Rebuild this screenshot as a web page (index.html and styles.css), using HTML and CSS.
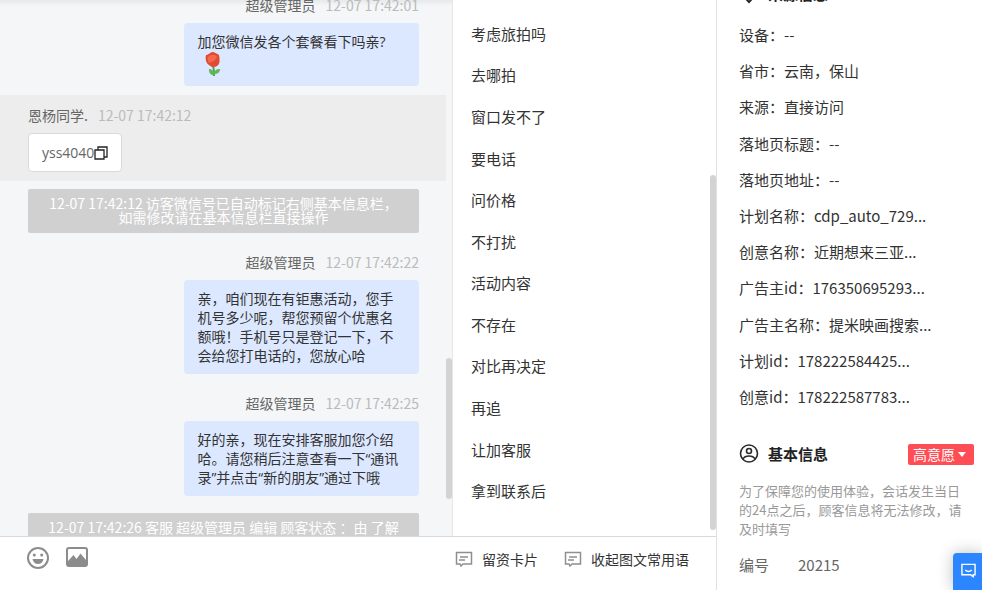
FILE: index.html
```html
<!DOCTYPE html>
<html lang="zh-CN">
<head>
    <meta charset="UTF-8">
    <meta name="viewport" content="width=device-width, initial-scale=1.0">
    <title>在线客服</title>
    <link rel="stylesheet" href="styles.css">
</head>
<body>
    <div class="app">
        <main class="workspace">
            <section class="chat">
                <div class="messages">
                    <div class="message mine">
                        <div class="meta"><span class="name">超级管理员</span><time>12-07 17:42:01</time></div>
                        <div class="bubble">加您微信发各个套餐看下吗亲?
                            <svg class="rose" viewBox="0 0 26 26" role="img" aria-label="玫瑰">
                                <path d="M14 14c1 4 1 7 1 11" stroke="#4fa64a" stroke-width="2" fill="none"/>
                                <path d="M15 24c-4 0-5-2-5-6 3 0 5 2 5 6zM15 23c0-3 2-5 6-5 0 3-2 5-6 5z" fill="#62b75a"/>
                                <path d="M7 4c2 0 3-2 6-3 3 0 5 2 7 3 1 5 1 9-2 11-3 2-6 1-8-1-3-2-4-6-3-10z" fill="#e34a34"/>
                                <path d="M9 6c3-3 7-3 9 0-1 3-4 5-8 6-1-2-2-4-1-6z" fill="#f36a4c"/>
                            </svg>
                        </div>
                    </div>

                    <div class="message visitor">
                        <div class="meta"><span class="name">恩杨同学.</span><time>12-07 17:42:12</time></div>
                        <div class="bubble">yss4040<button class="copy" type="button" aria-label="复制"><svg viewBox="0 0 14 14" fill="none" stroke="#222" stroke-width="1.3"><path d="M1 4h9v9H1z"/><path d="M4 4V1h9v10h-3"/></svg></button></div>
                    </div>

                    <p class="notice">12-07 17:42:12 访客微信号已自动标记右侧基本信息栏，如需修改请在基本信息栏直接操作</p>

                    <div class="message mine">
                        <div class="meta"><span class="name">超级管理员</span><time>12-07 17:42:22</time></div>
                        <div class="bubble">亲，咱们现在有钜惠活动，您手机号多少呢，帮您预留个优惠名额哦！手机号只是登记一下，不会给您打电话的，您放心哈</div>
                    </div>

                    <div class="message mine">
                        <div class="meta"><span class="name">超级管理员</span><time>12-07 17:42:25</time></div>
                        <div class="bubble">好的亲，现在安排客服加您介绍哈。请您稍后注意查看一下“通讯录”并点击“新的朋友”通过下哦</div>
                    </div>

                    <p class="notice">12-07 17:42:26 客服 超级管理员 编辑 顾客状态 ：由 了解</p>
                </div>
                <div class="scroll chat-scroll"></div>
            </section>

            <section class="phrases">
                <ul>
                    <li>考虑旅拍吗</li>
                    <li>去哪拍</li>
                    <li>窗口发不了</li>
                    <li>要电话</li>
                    <li>问价格</li>
                    <li>不打扰</li>
                    <li>活动内容</li>
                    <li>不存在</li>
                    <li>对比再决定</li>
                    <li>再追</li>
                    <li>让加客服</li>
                    <li>拿到联系后</li>
                </ul>
                <div class="scroll phrases-scroll"></div>
            </section>

            <footer class="toolbar">
                <div class="tools">
                    <button type="button" aria-label="表情">
                        <svg viewBox="0 0 22 22" fill="none">
                            <circle cx="11" cy="11" r="10" stroke="#8c8c8c" stroke-width="2"/>
                            <circle cx="7.3" cy="8" r="1.5" fill="#8c8c8c"/>
                            <circle cx="14.7" cy="8" r="1.5" fill="#8c8c8c"/>
                            <path d="M5.5 12h11c-.5 3-2.7 5-5.5 5s-5-2-5.5-5z" fill="#8c8c8c"/>
                        </svg>
                    </button>
                    <button type="button" aria-label="图片">
                        <svg viewBox="0 0 22 22" fill="none">
                            <rect x="1" y="1" width="20" height="18" rx="2" stroke="#8c8c8c" stroke-width="2"/>
                            <path d="M2 14l5.5-6 3 4 4-5.5L20 13v6H2z" fill="#8c8c8c"/>
                        </svg>
                    </button>
                </div>
                <div class="actions">
                    <button type="button">
                        <svg viewBox="0 0 18 16" fill="none" stroke="#8f8f8f" stroke-width="1.5"><path d="M1.5 1.500h15v11.500H8L6 15l-1-2H1.500z"/><path d="M5 6h8M4 9h6"/></svg>
                        留资卡片
                    </button>
                    <button type="button">
                        <svg viewBox="0 0 18 16" fill="none" stroke="#8f8f8f" stroke-width="1.5"><path d="M1.5 1.500h15v11.500H8L6 15l-1-2H1.500z"/><path d="M5 6h8M4 9h6"/></svg>
                        收起图文常用语
                    </button>
                </div>
            </footer>
        </main>

        <aside class="profile">
            <h2>
                <svg viewBox="0 0 20 20" fill="none" stroke="#222" stroke-width="2"><path d="M10 18c-4-4-6-6-6-9a6 6 0 0 1 12 0c0 3-2 5-6 9z"/><circle cx="10" cy="8" r="2"/></svg>
                来源信息
            </h2>
            <ul class="source">
                <li>设备：--</li>
                <li>省市：云南，保山</li>
                <li>来源：直接访问</li>
                <li>落地页标题：--</li>
                <li>落地页地址：--</li>
                <li>计划名称：cdp_auto_729...</li>
                <li>创意名称：近期想来三亚...</li>
                <li>广告主id：176350695293...</li>
                <li>广告主名称：提米映画搜索...</li>
                <li>计划id：178222584425...</li>
                <li>创意id：178222587783...</li>
            </ul>
            <h2>
                <svg viewBox="0 0 20 20" fill="none" stroke="#2b2b2b" stroke-width="1.6"><circle cx="10" cy="9.500" r="8.500"/><circle cx="10" cy="7" r="2.500"/><path d="M4 15c1-2 3-3 6-3s5 1 6 3"/></svg>
                基本信息
                <button class="tag" type="button">高意愿</button>
            </h2>
            <p class="tip">为了保障您的使用体验，会话发生当日的24点之后，顾客信息将无法修改，请及时填写</p>
            <dl class="basic">
                <dt>编号</dt>
                <dd>20215</dd>
            </dl>
        </aside>
    </div>

    <button class="float-chat" type="button" aria-label="在线咨询">
        <svg viewBox="0 0 16 15" fill="none" stroke="#fff" stroke-width="1.5"><path d="M1 1h14v11h-2v2l-3-2H1z"/><path d="M4.5 7c2 1.800 5 1.800 7 0"/></svg>
    </button>
</body>
</html>
```
FILE: styles.css
```css
* {
    box-sizing: border-box;
}
body {
    margin: 0;
    font-family: "Noto Sans CJK SC", sans-serif;
    font-size: 15px;
    line-height: 20px;
    color: #333;
    background: #fff;
}
ul, dl, dd, p, h2 {
    margin: 0;
    padding: 0;
    list-style: none;
}
button {
    padding: 0;
    border: 0;
    background: none;
    font: inherit;
    color: inherit;
    cursor: pointer;
}
svg {
    display: block;
    flex: none;
}
.app {
    display: grid;
    grid-template-columns: 1fr 266px;
    height: 100vh;
    overflow: hidden;
}
.workspace {
    display: grid;
    grid-template-columns: 1fr 264px;
    grid-template-rows: minmax(0, 1fr) 54px;
    min-height: 0;
}

/* chat */
.chat {
    position: relative;
    overflow: hidden;
    padding-right: 6px;
    background: linear-gradient(#e6e8ea, #f4f6f8 6px);
    font-size: 14px;
}
.messages {
    margin-top: -15px;
}
.message {
    display: flex;
    flex-direction: column;
    align-items: flex-start;
    gap: 8px;
    padding: 10px 27px 9px 28px;
}
.mine {
    align-items: flex-end;
}
.visitor {
    background: #ededed;
}
.meta {
    display: flex;
    gap: 10px;
    color: #666;
}
.meta time {
    color: #bbb;
}
.bubble {
    padding: 9px 13px;
    border-radius: 4px;
    font-family: "Open Sans", "Noto Sans CJK SC", sans-serif;
    line-height: 19px;
}
.mine .bubble {
    width: 60%;
    background: #dce8ff;
}
.visitor .bubble {
    display: flex;
    align-items: center;
    border: 1px solid #d9d9d9;
    background: #fff;
    color: #666;
}
.rose {
    width: 26px;
    height: 26px;
    margin-left: 2px;
}
.copy svg {
    width: 14px;
    height: 14px;
}
.notice {
    margin: 8px 27px 9px 28px;
    padding: 7px 16px 9px;
    border-radius: 2px;
    background: #d0d0d0;
    color: #fff;
    line-height: 14px;
    text-align: center;
}
.scroll {
    position: absolute;
    width: 6px;
    border-radius: 3px;
    background: #d3d3d3;
}
.chat-scroll {
    top: 358px;
    right: 0;
    height: 141px;
}
.phrases-scroll {
    top: 175px;
    right: 0;
    height: 355px;
}

/* quick phrases */
.phrases {
    position: relative;
    padding: 13px 18px 24px;
    border-left: 1px solid #e6e6e6;
}
.phrases ul {
    display: grid;
    grid-auto-rows: 1fr;
    align-items: center;
    height: 100%;
}

.toolbar {
    grid-column: 1 / 3;
    display: flex;
    justify-content: space-between;
    padding: 10px 27px;
    border-top: 1px solid #d9d9d9;
    font-size: 14px;
}
.tools, .actions {
    display: flex;
    align-items: flex-start;
}
.tools {
    gap: 17px;
}
.tools svg {
    width: 22px;
    height: 22px;
}
.actions {
    gap: 26px;
    padding-top: 2px;
}
.actions button {
    display: flex;
    align-items: center;
    gap: 9px;
}
.actions svg {
    width: 18px;
    height: 16px;
}

/* visitor profile */
.profile {
    padding-left: 22px;
    padding-right: 8px;
    border-left: 1px solid #e0e0e0;
    overflow: hidden;
}
.profile h2 {
    display: flex;
    align-items: center;
    gap: 9px;
    height: 20px;
    font-size: 15px;
    font-weight: 700;
    color: #222;
}
.profile h2:first-child {
    margin-top: -16px;
}
.profile h2 svg {
    width: 20px;
    height: 20px;
}
.source {
    display: grid;
    grid-auto-rows: 1fr;
    align-items: center;
    height: 398px;
    margin: 13px 0 29px;
}
.tag {
    display: flex;
    align-items: center;
    gap: 3px;
    margin-left: auto;
    padding: 0 8px 0 5px;
    border-radius: 2px;
    background: #ff4d55;
    color: #fff;
    font-size: 14px;
    font-weight: 400;
    line-height: 21px;
}
.tag::after {
    content: "";
    border: 4px solid transparent;
    border-top: 5px solid #fff;
    border-bottom: 0;
}
.tip {
    margin: 17px 8px 17px 0;
    color: #999;
    font-size: 13px;
    line-height: 19px;
}
.basic {
    display: flex;
    gap: 29px;
    color: #666;
}
.float-chat {
    position: fixed;
    right: 0;
    bottom: 0;
    padding: 10px 6px 12px 8px;
    border-radius: 4px 0 0 0;
    background: #2b86ff;
    box-shadow: 0 0 16px rgba(0, 0, 0, 0.25);
}
.float-chat svg {
    width: 15px;
    height: 15px;
}
```
